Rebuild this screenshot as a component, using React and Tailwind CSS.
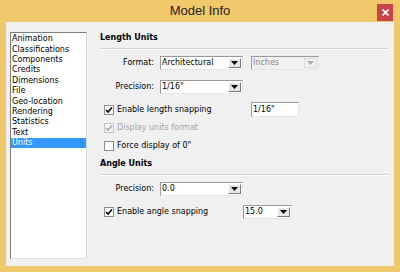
import React from "react";

const items = [
  "Animation",
  "Classifications",
  "Components",
  "Credits",
  "Dimensions",
  "File",
  "Geo-location",
  "Rendering",
  "Statistics",
  "Text",
  "Units",
];

function Arrow({ disabled }) {
  return (
    <svg width="7" height="4" viewBox="0 0 7 4">
      <path d="M0 0H7L3.5 4Z" fill={disabled ? "#a8a8a8" : "#000"} />
    </svg>
  );
}

function Select({ value, width, disabled }) {
  return (
    <div
      className={`flex h-full items-stretch border border-t-[#9a9a9a] border-l-[#9a9a9a] border-r-[#e4e4e4] border-b-[#e4e4e4] ${
        disabled ? "bg-[#f0f0f0]" : "bg-white"
      } ${width}`}
    >
      <div className={`flex flex-1 items-center pl-[1px] ${disabled ? "text-[#8a8a8a]" : "text-black"}`}>
        {value}
      </div>
      <div
        className={`my-[1px] mr-[1px] flex w-[13px] items-center justify-center border ${
          disabled
            ? "border-[#dadada] bg-[#f0f0f0]"
            : "border-t-white border-l-white border-r-[#7a7a7a] border-b-[#7a7a7a] bg-[#e6e6e6]"
        }`}
      >
        <Arrow disabled={disabled} />
      </div>
    </div>
  );
}

function Check({ checked, disabled, label }) {
  return (
    <div className="flex items-center pl-[4px]">
      <div
        className={`flex h-[10px] w-[10px] items-center justify-center border ${
          disabled ? "border-[#c4c4c4] bg-[#f4f4f4]" : "border-[#8f8f8f] bg-white"
        }`}
      >
        {checked && (
          <svg width="8" height="8" viewBox="0 0 8 8">
            <path
              d="M1 4L3 6L7 1.5"
              stroke={disabled ? "#a8a8a8" : "#000"}
              strokeWidth="1.6"
              fill="none"
            />
          </svg>
        )}
      </div>
      <span className={`ml-[3px] ${disabled ? "text-[#a4a4a4]" : "text-black"}`}>{label}</span>
    </div>
  );
}

function Heading({ children, className }) {
  return (
    <>
      <div className={`flex h-[12px] items-center text-[8px] font-bold text-black ${className}`}>
        {children}
      </div>
      <div className="mt-[4px] h-[2px] border-t border-t-[#d2d2d2] border-b border-b-white" />
    </>
  );
}

export default function App() {
  return (
    <div
      className="flex h-[272px] w-[400px] flex-col bg-[#f1c96c] px-[6px] pb-[6px] text-[8px] text-black"
      style={{ fontFamily: '"DejaVu Sans", Verdana, sans-serif' }}
    >
      <div className="flex h-[22px] items-start px-[1px]">
        <div className="w-[16px]" />
        <div
          className="flex h-[22px] flex-1 items-center justify-center text-[13px] text-[#1e1e1e]"
          style={{ fontFamily: '"Liberation Sans", Arial, sans-serif' }}
        >
          Model Info
        </div>
        <div className="mt-[4px] flex h-[17px] w-[16px] items-center justify-center bg-[#c7444b]">
          <svg width="7" height="7" viewBox="0 0 7 7">
            <path d="M0.5 0.5L6.5 6.5M6.5 0.5L0.5 6.5" stroke="#fff" strokeWidth="1.7" />
          </svg>
        </div>
      </div>

      <div className="flex flex-1 bg-[#f0f0f0] pl-[4px] pr-[5px] pt-[10px] pb-[7px]">
        <div className="w-[77px] border border-t-[#7e7e7e] border-l-[#7e7e7e] border-r-[#dcdcdc] border-b-[#dcdcdc] bg-white pt-[1px]">
          {items.map((it) => (
            <div
              key={it}
              className={`flex h-[10.4px] items-center pl-[1px] leading-none ${
                it === "Units" ? "bg-[#3399ff] text-white" : "text-black"
              }`}
            >
              {it}
            </div>
          ))}
        </div>

        <div className="ml-[13px] flex flex-1 flex-col">
          <Heading>Length Units</Heading>

          <div className="mt-[6px] flex h-[14px] items-center">
            <div className="w-[55px] pr-[1px] text-right">Format:</div>
            <div className="ml-[5px] h-full">
              <Select value="Architectural" width="w-[83px]" />
            </div>
            <div className="ml-[8px] h-full">
              <Select value="Inches" width="w-[68px]" disabled />
            </div>
          </div>

          <div className="mt-[10px] flex h-[14px] items-center">
            <div className="w-[55px] pr-[1px] text-right">Precision:</div>
            <div className="ml-[5px] h-full">
              <Select value={'1/16"'} width="w-[83px]" />
            </div>
          </div>

          <div className="mt-[8px] flex h-[15px] items-center">
            <div className="w-[151px]">
              <Check checked label="Enable length snapping" />
            </div>
            <div className="flex h-full w-[48px] items-center border border-t-[#9a9a9a] border-l-[#9a9a9a] border-r-[#e4e4e4] border-b-[#e4e4e4] bg-white pl-[1px]">
              1/16"
            </div>
          </div>

          <div className="mt-[5px] flex h-[12px] items-center">
            <Check checked disabled label="Display units format" />
          </div>

          <div className="mt-[6px] flex h-[12px] items-center">
            <Check label={'Force display of 0"'} />
          </div>

          <div className="mt-[6px]">
            <Heading>Angle Units</Heading>
          </div>

          <div className="mt-[6px] flex h-[14px] items-center">
            <div className="w-[55px] pr-[1px] text-right">Precision:</div>
            <div className="ml-[5px] h-full">
              <Select value="0.0" width="w-[83px]" />
            </div>
          </div>

          <div className="mt-[9px] flex h-[14px] items-center">
            <div className="w-[143px]">
              <Check checked label="Enable angle snapping" />
            </div>
            <div className="h-full">
              <Select value="15.0" width="w-[49px]" />
            </div>
          </div>
        </div>
      </div>
    </div>
  );
}
